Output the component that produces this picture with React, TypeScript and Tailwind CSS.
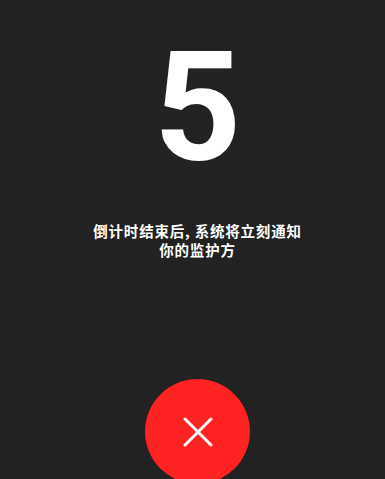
import React from "react";

export default function App() {
  return (
    <div className="w-[385px] h-[479px] bg-[#222222] overflow-hidden flex flex-col items-center pl-[10px] font-['Noto_Sans_CJK_SC',sans-serif]">
      <div className="mt-[28px] h-[160px] flex items-center justify-center text-white font-bold text-[152px] leading-[160px] font-['Roboto',sans-serif]">
        5
      </div>
      <div className="mt-[33px] text-white text-[14.5px] leading-[19px] font-semibold text-center tracking-[0.8px]">
        <div>倒计时结束后, 系统将立刻通知</div>
        <div>你的监护方</div>
      </div>
      <div className="mt-[120px] w-[105px] h-[105px] shrink-0 rounded-full bg-[#FF2222] flex items-center justify-center">
        <svg width="30" height="30" viewBox="0 0 30 30" fill="none" stroke="white" strokeWidth="3" strokeLinecap="round">
          <path d="M2 2 L28 28 M28 2 L2 28" />
        </svg>
      </div>
    </div>
  );
}
